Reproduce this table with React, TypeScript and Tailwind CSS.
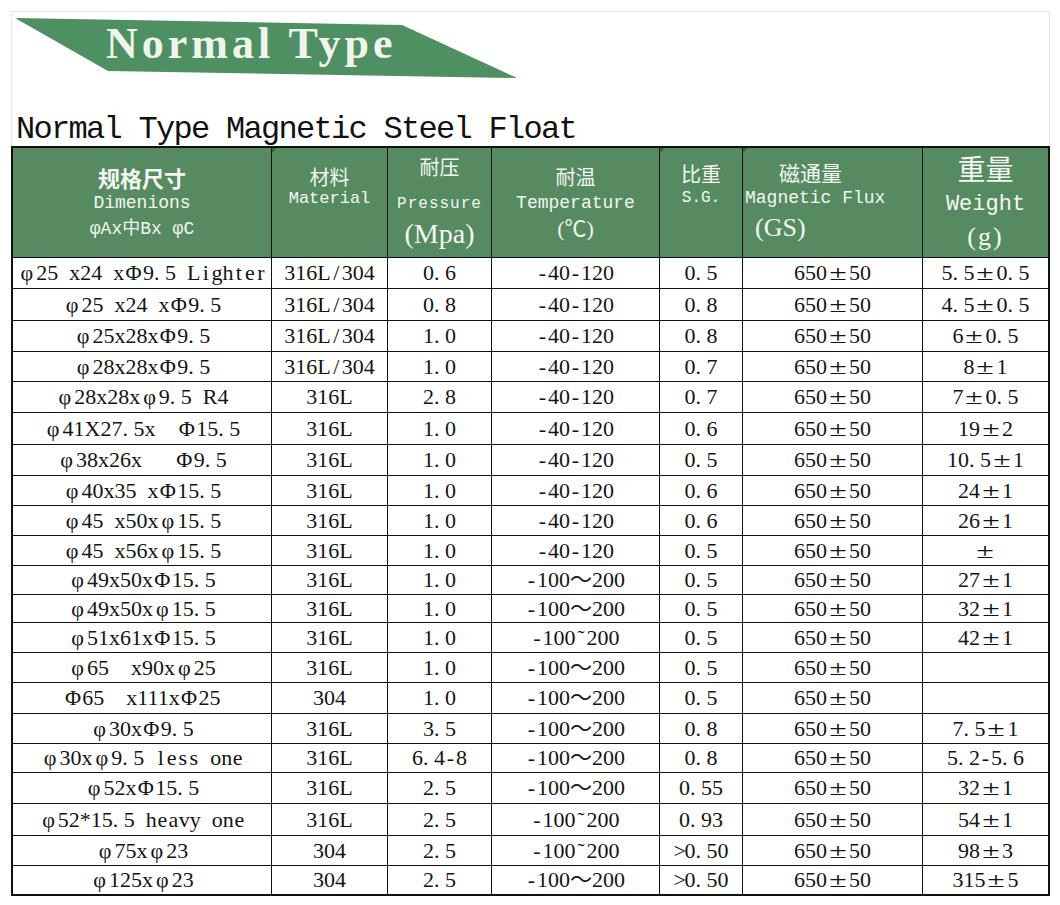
import React from "react";

const mono = "[font-family:'Liberation_Mono','Noto_Sans_CJK_SC',monospace]";
const cjk = "[font-family:'Noto_Sans_CJK_SC',sans-serif]";
const serif = "[font-family:'Liberation_Serif','Noto_Sans_CJK_SC',serif]";

function fmt(s: string) {
  return [...s].map((c, i) => {
    if (c === ".")
      return (
        <span key={i} className="inline-block w-[0.5em] text-left">
          .
        </span>
      );
    if (c === "±")
      return (
        <span key={i} className="inline-block w-[1em] text-center">
          <span className="inline-block scale-x-[1.45]">±</span>
        </span>
      );
    if (c === "φ" || c === "Φ")
      return (
        <span key={i} className="inline-block w-[0.85em] text-center">
          {c}
        </span>
      );
    if (" -/*>˜".includes(c) || /[a-z]/.test(c))
      return (
        <span key={i} className="inline-block w-[0.5em] text-center">
          {c === " " ? "\u00a0" : c}
        </span>
      );
    return <React.Fragment key={i}>{c}</React.Fragment>;
  });
}

type Row = { h: string; c: string[] };

const rows: Row[] = [
  { h: "h-[31px]", c: ["φ25 x24 xΦ9.5 Lighter", "316L/304", "0.6", "-40-120", "0.5", "650±50", "5.5±0.5"] },
  { h: "h-[32px]", c: ["φ25 x24 xΦ9.5", "316L/304", "0.8", "-40-120", "0.8", "650±50", "4.5±0.5"] },
  { h: "h-[31px]", c: ["φ25x28xΦ9.5", "316L/304", "1.0", "-40-120", "0.8", "650±50", "6±0.5"] },
  { h: "h-[30px]", c: ["φ28x28xΦ9.5", "316L/304", "1.0", "-40-120", "0.7", "650±50", "8±1"] },
  { h: "h-[31px]", c: ["φ28x28xφ9.5 R4", "316L", "2.8", "-40-120", "0.7", "650±50", "7±0.5"] },
  { h: "h-[32px]", c: ["φ41X27.5x  Φ15.5", "316L", "1.0", "-40-120", "0.6", "650±50", "19±2"] },
  { h: "h-[31px]", c: ["φ38x26x   Φ9.5", "316L", "1.0", "-40-120", "0.5", "650±50", "10.5±1"] },
  { h: "h-[30px]", c: ["φ40x35 xΦ15.5", "316L", "1.0", "-40-120", "0.6", "650±50", "24±1"] },
  { h: "h-[30px]", c: ["φ45 x50xφ15.5", "316L", "1.0", "-40-120", "0.6", "650±50", "26±1"] },
  { h: "h-[30px]", c: ["φ45 x56xφ15.5", "316L", "1.0", "-40-120", "0.5", "650±50", "±"] },
  { h: "h-[29px]", c: ["φ49x50xΦ15.5", "316L", "1.0", "-100～200", "0.5", "650±50", "27±1"] },
  { h: "h-[28px]", c: ["φ49x50xφ15.5", "316L", "1.0", "-100～200", "0.5", "650±50", "32±1"] },
  { h: "h-[30px]", c: ["φ51x61xΦ15.5", "316L", "1.0", "-100˜200", "0.5", "650±50", "42±1"] },
  { h: "h-[30px]", c: ["φ65  x90xφ25", "316L", "1.0", "-100～200", "0.5", "650±50", ""] },
  { h: "h-[31px]", c: ["Φ65  x111xΦ25", "304", "1.0", "-100～200", "0.5", "650±50", ""] },
  { h: "h-[30px]", c: ["φ30xΦ9.5", "316L", "3.5", "-100～200", "0.8", "650±50", "7.5±1"] },
  { h: "h-[29px]", c: ["φ30xφ9.5 less one", "316L", "6.4-8", "-100～200", "0.8", "650±50", "5.2-5.6"] },
  { h: "h-[31px]", c: ["φ52xΦ15.5", "316L", "2.5", "-100～200", "0.55", "650±50", "32±1"] },
  { h: "h-[32px]", c: ["φ52*15.5 heavy one", "316L", "2.5", "-100˜200", "0.93", "650±50", "54±1"] },
  { h: "h-[30px]", c: ["φ75xφ23", "304", "2.5", "-100˜200", ">0.50", "650±50", "98±3"] },
  { h: "h-[28px]", c: ["φ125xφ23", "304", "2.5", "-100～200", ">0.50", "650±50", "315±5"] },
];

const cols = "grid grid-cols-[259px_116px_104px_168px_83px_180px_125px]";

function Marker() {
  return (
    <span className="absolute left-0 top-0 w-0 h-0 border-t-[5px] border-r-[5px] border-t-[#1f7a1f] border-r-transparent" />
  );
}

export default function App() {
  return (
    <div className="w-[1060px] h-[905px] bg-white pt-[11px] pl-[11px] text-[#141414]">
      <div className="w-[1039px] h-[135px] border-t border-l border-r border-[#e6e6e6] flex flex-col">
        <div className="ml-[3px] mt-[6px] w-[502px] h-[60px] bg-[#4e9062] [clip-path:polygon(0_0,387px_7px,100%_100%,93px_53px)]">
          <div
            className={`pl-[91px] pt-[4px] text-[44px] leading-[44px] font-bold tracking-[4px] text-[#eef5ec] ${serif}`}
          >
            Normal Type
          </div>
        </div>
        <div className="h-[68px] flex items-end pl-[4px]">
          <div className={`text-[32px] leading-[32px] tracking-[-1.7px] text-[#111] ${mono}`}>
            Normal Type Magnetic Steel Float
          </div>
        </div>
      </div>

      <div className="w-[1039px] border-2 border-[#111]">
        {/* header */}
        <div className={`${cols} h-[110px] bg-[#568b61] text-[#f4f6f2] border-b border-[#111]`}>
          <div className="border-r border-[#111] pt-[16px] text-center">
            <div className={`${cjk} text-[22px] font-bold leading-[26px]`}>规格尺寸</div>
            <div className={`${mono} text-[18px] leading-[26px]`}>Dimenions</div>
            <div className={`${mono} text-[18px] leading-[26px]`}>φAx中Bx φC</div>
          </div>
          <div className="relative border-r border-[#111] pt-[17px] text-center">
            <Marker />
            <div className={`${cjk} text-[20px] leading-[24px]`}>材料</div>
            <div className={`${mono} text-[17px] leading-[20px]`}>Material</div>
          </div>
          <div className="border-r border-[#111] pt-[6px] text-center">
            <div className={`${cjk} text-[20px] leading-[26px]`}>耐压</div>
            <div className={`${mono} text-[16px] tracking-[1px] leading-[24px] mt-[12px]`}>Pressure</div>
            <div className={`${serif} text-[28px] leading-[36px]`}>(Mpa)</div>
          </div>
          <div className="border-r border-[#111] pt-[16px] text-center">
            <div className={`${cjk} text-[20px] leading-[26px]`}>耐温</div>
            <div className={`${mono} text-[18px] leading-[26px]`}>Temperature</div>
            <div className={`${serif} text-[22px] leading-[26px]`}>(℃)</div>
          </div>
          <div className="relative border-r border-[#111] pt-[13px] text-center">
            <Marker />
            <div className={`${cjk} text-[20px] leading-[25px]`}>比重</div>
            <div className={`${mono} text-[16px] leading-[25px]`}>S.G.</div>
          </div>
          <div className="relative border-r border-[#111] pt-[11px] text-left">
            <Marker />
            <div className={`${cjk} text-[21px] leading-[26px] pl-[36px]`}>磁通量</div>
            <div className={`${mono} text-[18px] leading-[26px] pl-[2px]`}>Magnetic Flux</div>
            <div className={`${serif} text-[26px] leading-[34px] pl-[12px]`}>(GS)</div>
          </div>
          <div className="pt-[2px] text-center">
            <div className={`${cjk} text-[28px] leading-[36px]`}>重量</div>
            <div className={`${mono} text-[22px] leading-[38px]`}>Weight</div>
            <div className={`${serif} text-[26px] leading-[26px] tracking-[2px]`}>(g)</div>
          </div>
        </div>

        {/* body */}
        {rows.map((r, ri) => (
          <div
            key={ri}
            className={`${cols} ${r.h} ${ri < rows.length - 1 ? "border-b border-[#111]" : ""} ${serif} text-[22px]`}
          >
            {r.c.map((cell, ci) => (
              <div
                key={ci}
                className={`flex items-center justify-center whitespace-nowrap leading-none ${
                  ci < 6 ? "border-r border-[#111]" : ""
                }`}
              >
                <span>{fmt(cell)}</span>
              </div>
            ))}
          </div>
        ))}
      </div>
    </div>
  );
}
